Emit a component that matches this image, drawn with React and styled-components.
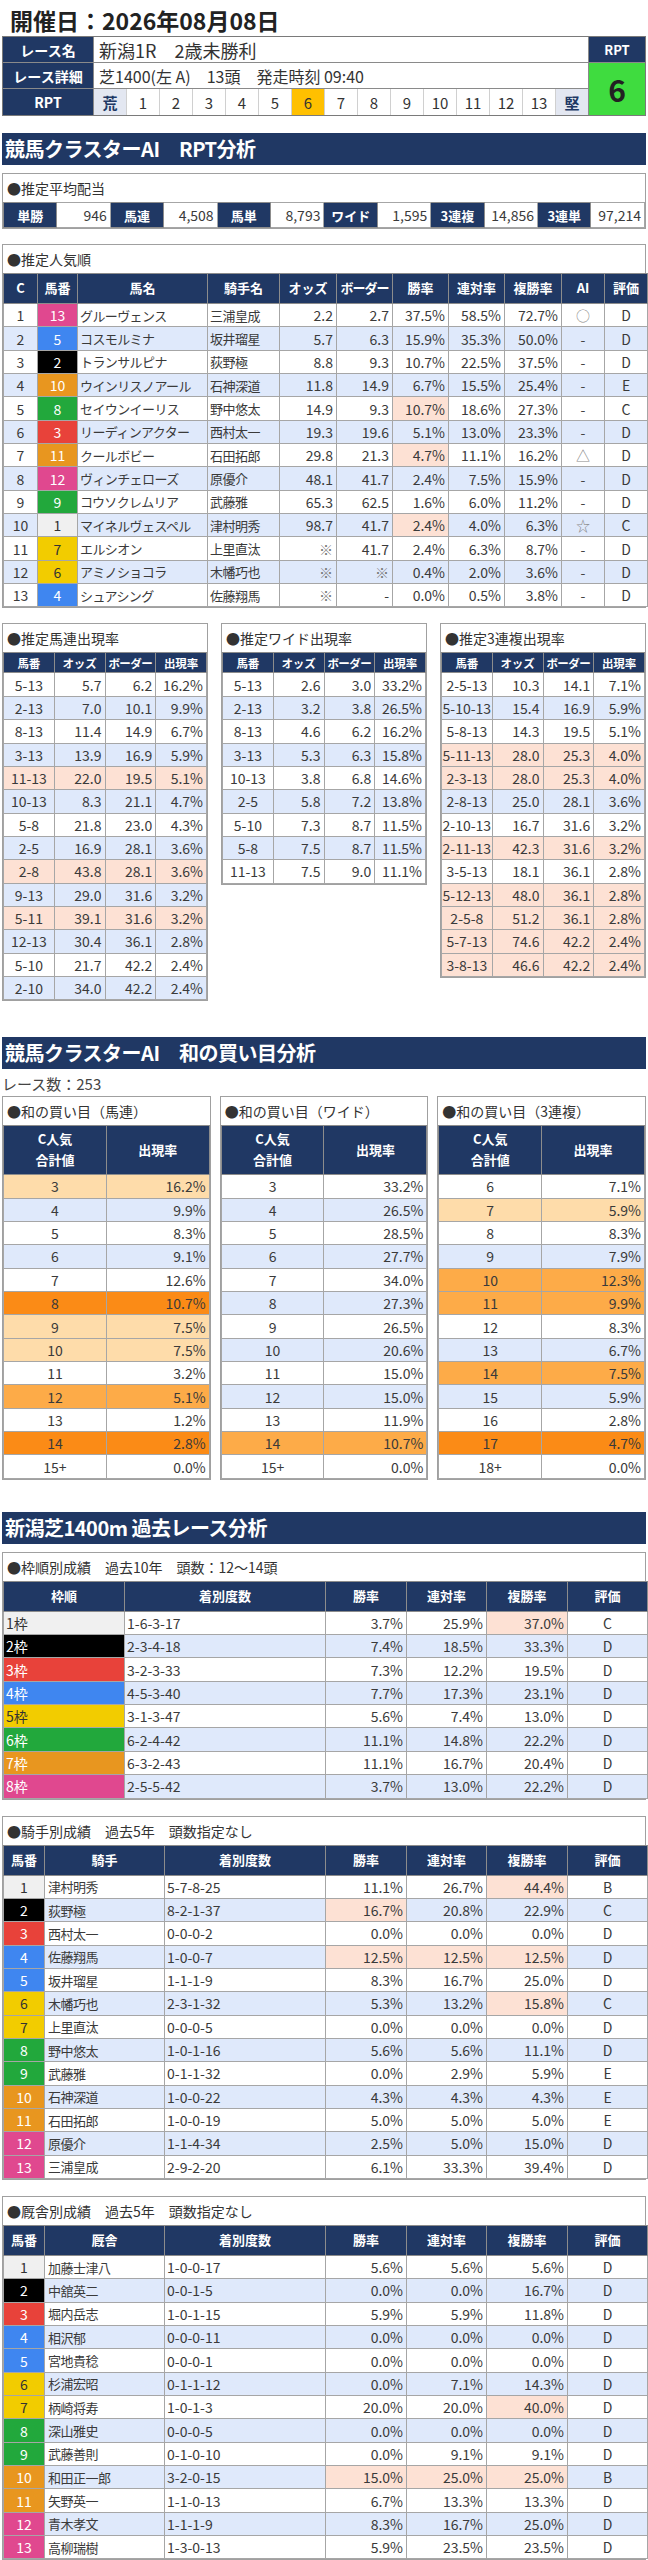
import React from "react";
import styled, { createGlobalStyle } from "styled-components";

// palette
const NAVY = "#203864";
const STRIPE = "#dfe9fb";
const SALMON = "#fde1d4";
const PEACH = "#fedcaa";
const ORANGE = "#fdab48";
const DEEP = "#fb8b16";

const FRAMES = {
  1: { bg: "#f0f0f0", fg: "#333" },
  2: { bg: "#000000", fg: "#fff" },
  3: { bg: "#e8423a", fg: "#fff" },
  4: { bg: "#3f86f0", fg: "#fff" },
  5: { bg: "#f2cc00", fg: "#333" },
  6: { bg: "#22a83c", fg: "#fff" },
  7: { bg: "#e8961f", fg: "#fff" },
  8: { bg: "#e0488f", fg: "#fff" },
};
const frameOf = (n) => FRAMES[[1, 2, 3, 4, 4, 5, 5, 6, 6, 7, 7, 8, 8][n - 1]];
const stripe = (i) => (i % 2 === 1 ? STRIPE : "#fff");

// data
const payouts = [
  ["単勝", "946"], ["馬連", "4,508"], ["馬単", "8,793"],
  ["ワイド", "1,595"], ["3連複", "14,856"], ["3連単", "97,214"],
];

const popular = [
  [1, 13, "グルーヴェンス", "三浦皇成", "2.2", "2.7", "37.5%", "58.5%", "72.7%", "○", "D"],
  [2, 5, "コスモルミナ", "坂井瑠星", "5.7", "6.3", "15.9%", "35.3%", "50.0%", "-", "D"],
  [3, 2, "トランサルピナ", "荻野極", "8.8", "9.3", "10.7%", "22.5%", "37.5%", "-", "D"],
  [4, 10, "ウインリスノアール", "石神深道", "11.8", "14.9", "6.7%", "15.5%", "25.4%", "-", "E"],
  [5, 8, "セイウンイーリス", "野中悠太", "14.9", "9.3", "10.7%", "18.6%", "27.3%", "-", "C", true],
  [6, 3, "リーディンアクター", "西村太一", "19.3", "19.6", "5.1%", "13.0%", "23.3%", "-", "D"],
  [7, 11, "クールボビー", "石田拓郎", "29.8", "21.3", "4.7%", "11.1%", "16.2%", "△", "D", true],
  [8, 12, "ヴィンチェローズ", "原優介", "48.1", "41.7", "2.4%", "7.5%", "15.9%", "-", "D"],
  [9, 9, "コウソクレムリア", "武藤雅", "65.3", "62.5", "1.6%", "6.0%", "11.2%", "-", "D"],
  [10, 1, "マイネルヴェスペル", "津村明秀", "98.7", "41.7", "2.4%", "4.0%", "6.3%", "☆", "C", true],
  [11, 7, "エルシオン", "上里直汰", "※", "41.7", "2.4%", "6.3%", "8.7%", "-", "D"],
  [12, 6, "アミノショコラ", "木幡巧也", "※", "※", "0.4%", "2.0%", "3.6%", "-", "D"],
  [13, 4, "シュアシング", "佐藤翔馬", "※", "-", "0.0%", "0.5%", "3.8%", "-", "D"],
];

const umaren = [
  ["5-13", "5.7", "6.2", "16.2%"], ["2-13", "7.0", "10.1", "9.9%"], ["8-13", "11.4", "14.9", "6.7%"],
  ["3-13", "13.9", "16.9", "5.9%"], ["11-13", "22.0", "19.5", "5.1%", true], ["10-13", "8.3", "21.1", "4.7%"],
  ["5-8", "21.8", "23.0", "4.3%"], ["2-5", "16.9", "28.1", "3.6%"], ["2-8", "43.8", "28.1", "3.6%", true],
  ["9-13", "29.0", "31.6", "3.2%"], ["5-11", "39.1", "31.6", "3.2%", true], ["12-13", "30.4", "36.1", "2.8%"],
  ["5-10", "21.7", "42.2", "2.4%"], ["2-10", "34.0", "42.2", "2.4%"],
];
const wide = [
  ["5-13", "2.6", "3.0", "33.2%"], ["2-13", "3.2", "3.8", "26.5%"], ["8-13", "4.6", "6.2", "16.2%"],
  ["3-13", "5.3", "6.3", "15.8%"], ["10-13", "3.8", "6.8", "14.6%"], ["2-5", "5.8", "7.2", "13.8%"],
  ["5-10", "7.3", "8.7", "11.5%"], ["5-8", "7.5", "8.7", "11.5%"], ["11-13", "7.5", "9.0", "11.1%"],
];
const trio = [
  ["2-5-13", "10.3", "14.1", "7.1%"], ["5-10-13", "15.4", "16.9", "5.9%"], ["5-8-13", "14.3", "19.5", "5.1%"],
  ["5-11-13", "28.0", "25.3", "4.0%", true], ["2-3-13", "28.0", "25.3", "4.0%", true], ["2-8-13", "25.0", "28.1", "3.6%"],
  ["2-10-13", "16.7", "31.6", "3.2%"], ["2-11-13", "42.3", "31.6", "3.2%", true], ["3-5-13", "18.1", "36.1", "2.8%"],
  ["5-12-13", "48.0", "36.1", "2.8%", true], ["2-5-8", "51.2", "36.1", "2.8%", true], ["5-7-13", "74.6", "42.2", "2.4%", true],
  ["3-8-13", "46.6", "42.2", "2.4%", true],
];

// sum tables: [value, rate, level] level: p=peach o=orange d=deep w=white
const sumUmaren = [
  ["3", "16.2%", "p"], ["4", "9.9%"], ["5", "8.3%"], ["6", "9.1%"], ["7", "12.6%"], ["8", "10.7%", "d"],
  ["9", "7.5%", "p"], ["10", "7.5%", "p"], ["11", "3.2%"], ["12", "5.1%", "o"], ["13", "1.2%"],
  ["14", "2.8%", "d"], ["15+", "0.0%", "w"],
];
const sumWide = [
  ["3", "33.2%"], ["4", "26.5%"], ["5", "28.5%"], ["6", "27.7%"], ["7", "34.0%"], ["8", "27.3%"],
  ["9", "26.5%"], ["10", "20.6%"], ["11", "15.0%"], ["12", "15.0%"], ["13", "11.9%"],
  ["14", "10.7%", "o"], ["15+", "0.0%", "w"],
];
const sumTrio = [
  ["6", "7.1%"], ["7", "5.9%", "p"], ["8", "8.3%"], ["9", "7.9%"], ["10", "12.3%", "o"], ["11", "9.9%", "o"],
  ["12", "8.3%"], ["13", "6.7%"], ["14", "7.5%", "o"], ["15", "5.9%"], ["16", "2.8%"],
  ["17", "4.7%", "d"], ["18+", "0.0%", "w"],
];
const LEVEL = { p: PEACH, o: ORANGE, d: DEEP, w: "#fff" };

// [record, win, quinella, show, grade, highlighted cols]
const frames = [
  ["1-6-3-17", "3.7%", "25.9%", "37.0%", "C", [4]],
  ["2-3-4-18", "7.4%", "18.5%", "33.3%", "D"],
  ["3-2-3-33", "7.3%", "12.2%", "19.5%", "D"],
  ["4-5-3-40", "7.7%", "17.3%", "23.1%", "D"],
  ["3-1-3-47", "5.6%", "7.4%", "13.0%", "D"],
  ["6-2-4-42", "11.1%", "14.8%", "22.2%", "D"],
  ["6-3-2-43", "11.1%", "16.7%", "20.4%", "D"],
  ["2-5-5-42", "3.7%", "13.0%", "22.2%", "D"],
];

const jockeys = [
  ["津村明秀", "5-7-8-25", "11.1%", "26.7%", "44.4%", "B", [4]],
  ["荻野極", "8-2-1-37", "16.7%", "20.8%", "22.9%", "C", [2]],
  ["西村太一", "0-0-0-2", "0.0%", "0.0%", "0.0%", "D"],
  ["佐藤翔馬", "1-0-0-7", "12.5%", "12.5%", "12.5%", "D", [2, 3, 4]],
  ["坂井瑠星", "1-1-1-9", "8.3%", "16.7%", "25.0%", "D"],
  ["木幡巧也", "2-3-1-32", "5.3%", "13.2%", "15.8%", "C", [4]],
  ["上里直汰", "0-0-0-5", "0.0%", "0.0%", "0.0%", "D"],
  ["野中悠太", "1-0-1-16", "5.6%", "5.6%", "11.1%", "D"],
  ["武藤雅", "0-1-1-32", "0.0%", "2.9%", "5.9%", "E"],
  ["石神深道", "1-0-0-22", "4.3%", "4.3%", "4.3%", "E"],
  ["石田拓郎", "1-0-0-19", "5.0%", "5.0%", "5.0%", "E"],
  ["原優介", "1-1-4-34", "2.5%", "5.0%", "15.0%", "D"],
  ["三浦皇成", "2-9-2-20", "6.1%", "33.3%", "39.4%", "D"],
];

const trainers = [
  ["加藤士津八", "1-0-0-17", "5.6%", "5.6%", "5.6%", "D"],
  ["中舘英二", "0-0-1-5", "0.0%", "0.0%", "16.7%", "D"],
  ["堀内岳志", "1-0-1-15", "5.9%", "5.9%", "11.8%", "D"],
  ["相沢郁", "0-0-0-11", "0.0%", "0.0%", "0.0%", "D"],
  ["宮地貴稔", "0-0-0-1", "0.0%", "0.0%", "0.0%", "D"],
  ["杉浦宏昭", "0-1-1-12", "0.0%", "7.1%", "14.3%", "D"],
  ["柄崎将寿", "1-0-1-3", "20.0%", "20.0%", "40.0%", "D", [4]],
  ["深山雅史", "0-0-0-5", "0.0%", "0.0%", "0.0%", "D"],
  ["武藤善則", "0-1-0-10", "0.0%", "9.1%", "9.1%", "D"],
  ["和田正一郎", "3-2-0-15", "15.0%", "25.0%", "25.0%", "B", [2, 3, 4]],
  ["矢野英一", "1-1-0-13", "6.7%", "13.3%", "13.3%", "D"],
  ["青木孝文", "1-1-1-9", "8.3%", "16.7%", "25.0%", "D"],
  ["高柳瑞樹", "1-3-0-13", "5.9%", "23.5%", "23.5%", "D"],
];

// styles
const GlobalStyle = createGlobalStyle`
  * { box-sizing: border-box; }
  body {
    margin: 0;
    background: #fff;
    color: #3a3a3a;
    font-family: "Noto Sans CJK JP", "Noto Sans", sans-serif;
  }
`;

const Page = styled.div`
  width: 648px;
  padding: 0 2px 2px;
`;

const DateTitle = styled.div`
  height: 36px;
  line-height: 40px;
  padding-left: 8px;
  font-size: 23px;
  font-weight: 700;
  color: #222;
`;

const RaceInfo = styled.div`
  display: grid;
  grid-template-columns: 90px 1fr 56px;
  grid-template-rows: 25px 25px 26px;
  gap: 1px;
  background: #8a8a8a;
  border: 1px solid #7a7a7a;
`;

const InfoLabel = styled.div`
  background: ${NAVY};
  color: #fff;
  font-size: 14px;
  font-weight: 700;
  display: flex;
  align-items: center;
  justify-content: center;
`;

const InfoText = styled.div`
  background: #fff;
  color: #333;
  font-size: ${(p) => p.$fs}px;
  display: flex;
  align-items: center;
  padding-left: 5px;
  white-space: pre;
`;

const Scale = styled.div`
  display: grid;
  grid-template-columns: repeat(15, 1fr);
  gap: 1px;
  background: #d0d0d0;
`;

const ScaleCell = styled.div`
  background: ${(p) => (p.$end ? "#e3e7f1" : p.$on ? "#ffc000" : "#fff")};
  color: ${(p) => (p.$end ? NAVY : "#333")};
  font-weight: ${(p) => (p.$end ? 700 : 400)};
  font-size: 15px;
  display: flex;
  align-items: center;
  justify-content: center;
`;

const RptHead = styled(InfoLabel)`
  font-size: 13px;
`;

const RptValue = styled.div`
  grid-column: 3;
  grid-row: 2 / span 2;
  background: #3fdc3f;
  color: #222;
  font-size: 30px;
  font-weight: 700;
  display: flex;
  align-items: center;
  justify-content: center;
`;

const SectionBar = styled.div`
  margin-top: ${(p) => p.$mt}px;
  height: 32px;
  line-height: 32px;
  padding-left: 3px;
  background: ${NAVY};
  color: #fff;
  font-size: 20px;
  font-weight: 700;
  letter-spacing: -0.5px;
  white-space: pre;
`;

const Box = styled.div`
  margin-top: ${(p) => p.$mt || 0}px;
  background: #fff;
  border: 1px solid #a0a0a0;
`;

const BoxTitle = styled.div`
  height: 28px;
  line-height: 28px;
  padding-left: 4px;
  font-size: 14px;
  color: #333;
  white-space: pre;
`;

const Trio = styled.div`
  margin-top: ${(p) => p.$mt}px;
  display: grid;
  grid-template-columns: repeat(3, 1fr);
  gap: ${(p) => p.$gap}px;
  align-items: start;
`;

const RaceCount = styled.div`
  height: 27px;
  line-height: 29px;
  font-size: 15px;
  color: #444;
`;

const Table = styled.table`
  width: 100%;
  border-collapse: collapse;
  table-layout: fixed;
`;

const Th = styled.th`
  height: ${(p) => p.$h || 30}px;
  padding: 0;
  background: ${NAVY};
  color: #fff;
  font-size: ${(p) => p.$fs || 13}px;
  font-weight: 700;
  line-height: 1.6;
  letter-spacing: ${(p) => p.$ls || 0}px;
  border: 1px solid #8c8c8c;
  white-space: nowrap;
`;

const Tr = styled.tr`
  height: ${(p) => p.$h || 23.35}px;
  background: ${(p) => p.$bg};
`;

const Td = styled.td`
  padding: 0 ${(p) => (p.$pad === undefined ? 3 : p.$pad)}px;
  border: 1px solid #a6a6a6;
  background: ${(p) => p.$bg || "transparent"};
  color: ${(p) => p.$fg || "#3a3a3a"};
  text-align: ${(p) => p.$align || "right"};
  font-size: ${(p) => p.$fs || 14}px;
  letter-spacing: ${(p) => p.$ls || 0}px;
  line-height: 1;
  white-space: nowrap;
  overflow: hidden;
`;

const PayLabel = styled(Td)`
  background: ${NAVY};
  color: #fff;
  font-weight: 700;
  text-align: center;
  border-color: #8c8c8c;
`;

// pieces
const Cols = ({ widths }) => (
  <colgroup>
    {widths.map((w, i) => (
      <col key={i} style={{ width: w }} />
    ))}
  </colgroup>
);

const OddsBox = ({ title, rows }) => (
  <Box>
    <BoxTitle>{title}</BoxTitle>
    <Table>
      <thead>
        <tr>
          <Th $h={20} $fs={11.5}>馬番</Th>
          <Th $h={20} $fs={11.5}>オッズ</Th>
          <Th $h={20} $fs={11.5} $ls={-0.5}>ボーダー</Th>
          <Th $h={20} $fs={11.5}>出現率</Th>
        </tr>
      </thead>
      <tbody>
        {rows.map((r, i) => (
          <Tr key={i} $bg={r[4] ? SALMON : stripe(i)}>
            <Td $align="center" $pad={0}>{r[0]}</Td>
            <Td>{r[1]}</Td>
            <Td>{r[2]}</Td>
            <Td>{r[3]}</Td>
          </Tr>
        ))}
      </tbody>
    </Table>
  </Box>
);

const SumBox = ({ title, rows }) => (
  <Box>
    <BoxTitle>{title}</BoxTitle>
    <Table>
      <thead>
        <tr>
          <Th $h={49} $fs={13}>C人気<br />合計値</Th>
          <Th $h={49} $fs={13}>出現率</Th>
        </tr>
      </thead>
      <tbody>
        {rows.map((r, i) => (
          <Tr key={i} $bg={r[2] ? LEVEL[r[2]] : stripe(i)}>
            <Td $align="center">{r[0]}</Td>
            <Td>{r[1]}</Td>
          </Tr>
        ))}
      </tbody>
    </Table>
  </Box>
);

const RecordBox = ({ title, head, rows }) => (
  <Box $mt={16}>
    <BoxTitle>{title}</BoxTitle>
    <Table>
      <Cols widths={[41, 120, 161, 81, 80, 81, 80]} />
      <thead>
        <tr>
          <Th>馬番</Th>
          <Th>{head}</Th>
          <Th>着別度数</Th>
          <Th>勝率</Th>
          <Th>連対率</Th>
          <Th>複勝率</Th>
          <Th>評価</Th>
        </tr>
      </thead>
      <tbody>
        {rows.map((r, i) => {
          const f = frameOf(i + 1);
          const hi = r[6] || [];
          return (
            <Tr key={i} $bg={stripe(i)}>
              <Td $align="center" $pad={0} $bg={f.bg} $fg={f.fg}>{i + 1}</Td>
              <Td $align="left" $fs={13} $ls={-0.5}>{r[0]}</Td>
              <Td $align="left" $pad={2}>{r[1]}</Td>
              <Td $bg={hi.includes(2) ? SALMON : undefined}>{r[2]}</Td>
              <Td $bg={hi.includes(3) ? SALMON : undefined}>{r[3]}</Td>
              <Td $bg={hi.includes(4) ? SALMON : undefined}>{r[4]}</Td>
              <Td $align="center">{r[5]}</Td>
            </Tr>
          );
        })}
      </tbody>
    </Table>
  </Box>
);

const App = () => (
  <>
    <GlobalStyle />
    <Page>
      <DateTitle>開催日：2026年08月08日</DateTitle>

      <RaceInfo>
        <InfoLabel>レース名</InfoLabel>
        <InfoText $fs={18}>{"新潟1R　2歳未勝利"}</InfoText>
        <RptHead>RPT</RptHead>
        <InfoLabel>レース詳細</InfoLabel>
        <InfoText $fs={16}>{"芝1400(左 A)　13頭　発走時刻 09:40"}</InfoText>
        <RptValue>6</RptValue>
        <InfoLabel>RPT</InfoLabel>
        <Scale>
          <ScaleCell $end>荒</ScaleCell>
          {Array.from({ length: 13 }, (_, i) => (
            <ScaleCell key={i} $on={i + 1 === 6}>{i + 1}</ScaleCell>
          ))}
          <ScaleCell $end>堅</ScaleCell>
        </Scale>
      </RaceInfo>

      <SectionBar $mt={17}>{"競馬クラスターAI　RPT分析"}</SectionBar>

      <Box $mt={8}>
        <BoxTitle>●推定平均配当</BoxTitle>
        <Table>
          <tbody>
            <Tr $h={25}>
              {payouts.map(([k, v]) => (
                <React.Fragment key={k}>
                  <PayLabel $fs={13}>{k}</PayLabel>
                  <Td $fs={14}>{v}</Td>
                </React.Fragment>
              ))}
            </Tr>
          </tbody>
        </Table>
      </Box>

      <Box $mt={15}>
        <BoxTitle>●推定人気順</BoxTitle>
        <Table>
          <Cols widths={[34, 40, 130, 72, 57, 56, 56, 56, 57, 43, 43]} />
          <thead>
            <tr>
              <Th>C</Th>
              <Th>馬番</Th>
              <Th>馬名</Th>
              <Th>騎手名</Th>
              <Th>オッズ</Th>
              <Th $ls={-1}>ボーダー</Th>
              <Th>勝率</Th>
              <Th>連対率</Th>
              <Th>複勝率</Th>
              <Th>AI</Th>
              <Th>評価</Th>
            </tr>
          </thead>
          <tbody>
            {popular.map((r, i) => {
              const f = frameOf(r[1]);
              return (
                <Tr key={r[0]} $bg={stripe(i)}>
                  <Td $align="center" $pad={0}>{r[0]}</Td>
                  <Td $align="center" $pad={0} $bg={f.bg} $fg={f.fg}>{r[1]}</Td>
                  <Td $align="left" $fs={13} $ls={-0.6} $pad={2}>{r[2]}</Td>
                  <Td $align="left" $fs={13} $ls={-0.5} $pad={2}>{r[3]}</Td>
                  <Td $fg={r[4] === "※" ? "#777" : undefined}>{r[4]}</Td>
                  <Td $fg={r[5] === "※" ? "#777" : undefined}>{r[5]}</Td>
                  <Td $bg={r[11] ? SALMON : undefined}>{r[6]}</Td>
                  <Td>{r[7]}</Td>
                  <Td>{r[8]}</Td>
                  <Td $align="center" $fg={r[9] === "-" ? "#444" : "#888"}>{r[9]}</Td>
                  <Td $align="center">{r[10]}</Td>
                </Tr>
              );
            })}
          </tbody>
        </Table>
      </Box>

      <Trio $mt={15} $gap={13}>
        <OddsBox title="●推定馬連出現率" rows={umaren} />
        <OddsBox title="●推定ワイド出現率" rows={wide} />
        <OddsBox title="●推定3連複出現率" rows={trio} />
      </Trio>

      <SectionBar $mt={36}>{"競馬クラスターAI　和の買い目分析"}</SectionBar>
      <RaceCount>レース数：253</RaceCount>

      <Trio $mt={0} $gap={9}>
        <SumBox title="●和の買い目（馬連）" rows={sumUmaren} />
        <SumBox title="●和の買い目（ワイド）" rows={sumWide} />
        <SumBox title="●和の買い目（3連複）" rows={sumTrio} />
      </Trio>

      <SectionBar $mt={32}>新潟芝1400m 過去レース分析</SectionBar>

      <Box $mt={8}>
        <BoxTitle>{"●枠順別成績　過去10年　頭数：12～14頭"}</BoxTitle>
        <Table>
          <Cols widths={[121, 201, 81, 80, 81, 80]} />
          <thead>
            <tr>
              <Th>枠順</Th>
              <Th>着別度数</Th>
              <Th>勝率</Th>
              <Th>連対率</Th>
              <Th>複勝率</Th>
              <Th>評価</Th>
            </tr>
          </thead>
          <tbody>
            {frames.map((r, i) => {
              const f = FRAMES[i + 1];
              const hi = r[5] || [];
              return (
                <Tr key={i} $bg={stripe(i)}>
                  <Td $align="left" $pad={2} $bg={f.bg} $fg={f.fg}>{i + 1}枠</Td>
                  <Td $align="left" $pad={2}>{r[0]}</Td>
                  <Td>{r[1]}</Td>
                  <Td>{r[2]}</Td>
                  <Td $bg={hi.includes(4) ? SALMON : undefined}>{r[3]}</Td>
                  <Td $align="center">{r[4]}</Td>
                </Tr>
              );
            })}
          </tbody>
        </Table>
      </Box>

      <RecordBox title={"●騎手別成績　過去5年　頭数指定なし"} head="騎手" rows={jockeys} />
      <RecordBox title={"●厩舎別成績　過去5年　頭数指定なし"} head="厩舎" rows={trainers} />
    </Page>
  </>
);

export default App;
